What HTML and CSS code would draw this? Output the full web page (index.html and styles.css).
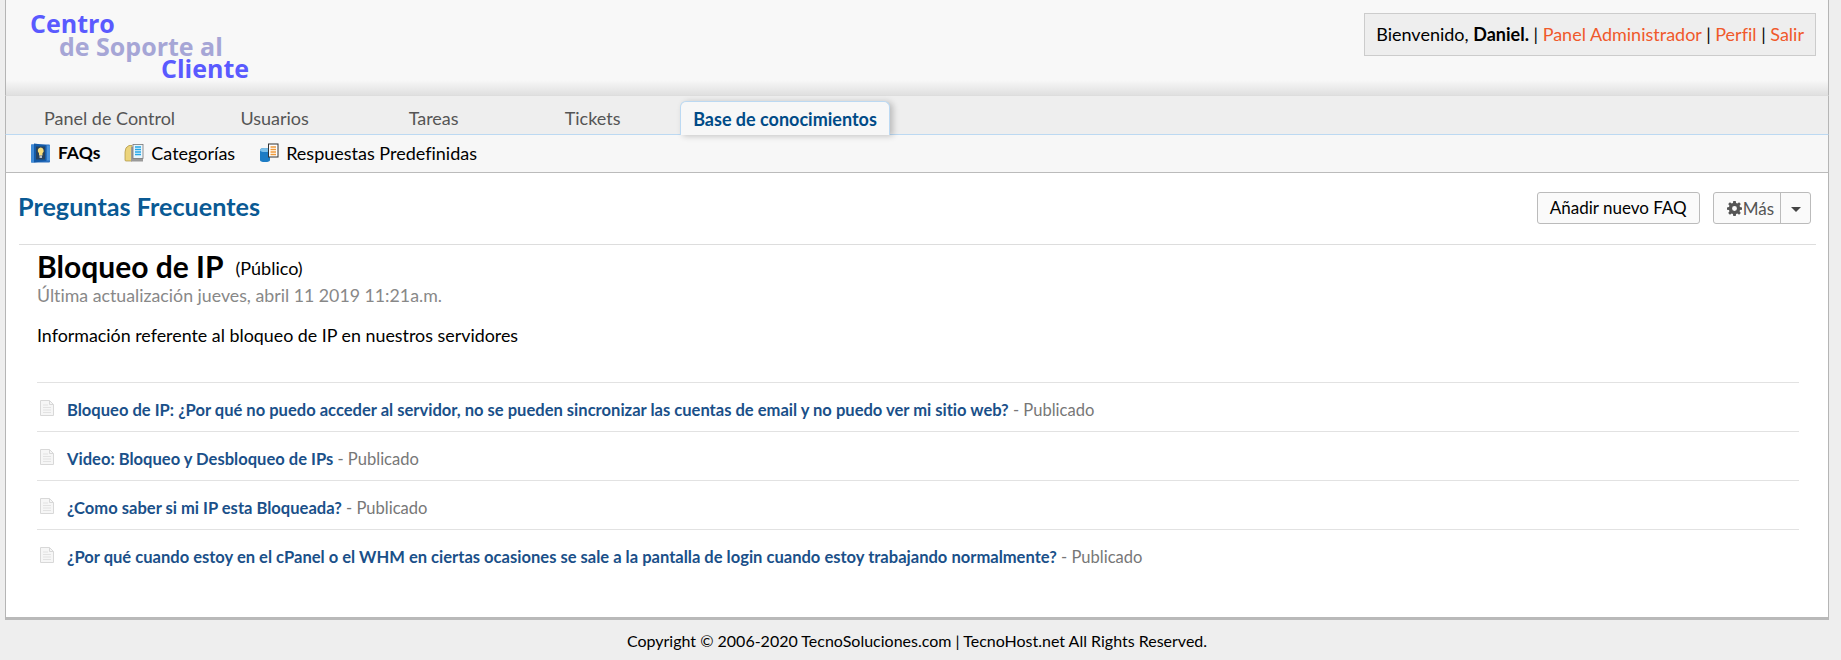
FILE: index.html
```html
<!DOCTYPE html>
<html lang="es">
<head>
<meta charset="utf-8">
<title>Centro de Soporte al Cliente</title>
<link rel="stylesheet" href="styles.css">
</head>
<body>
<div class="page">
  <header class="header">
    <div class="logo">
      <div class="logo-a">Centro</div>
      <div class="logo-b">de Soporte al</div>
      <div class="logo-c">Cliente</div>
    </div>
    <div class="welcome">Bienvenido, <strong>Daniel.</strong> | <a href="#">Panel Administrador</a> | <a href="#">Perfil</a> | <a href="#">Salir</a></div>
  </header>
  <nav class="tabs">
    <a class="tab tab-first" href="#">Panel de Control</a>
    <a class="tab" href="#">Usuarios</a>
    <a class="tab" href="#">Tareas</a>
    <a class="tab" href="#">Tickets</a>
    <a class="tab tab-active" href="#">Base de conocimientos</a>
  </nav>
  <nav class="subnav">
    <a class="sub sub-active" href="#">
      <svg class="sub-icon" viewBox="0 0 20 20"><rect x="0" y="1.500" width="19" height="18" rx="1" fill="#2a6fbe"/><rect x="0" y="1.500" width="3" height="18" fill="#3f8ad6"/><path d="M3 0.500l12 1.500v16l-12 1.500z" fill="#135aa8"/><rect x="5" y="3.500" width="9" height="13" fill="#27425f"/><path d="M9.500 4.500a3.200 3.200 0 0 1 2 5.700v2.300h-3.500v-2.300a3.200 3.200 0 0 1 1.500-5.700z" fill="#f7dc7a"/><rect x="8.500" y="12.500" width="2.500" height="2.500" fill="#b9bfc6"/><rect x="16" y="2.500" width="3" height="15" fill="#4a93dc"/></svg>
      <span>FAQs</span>
    </a>
    <a class="sub" href="#">
      <svg class="sub-icon" viewBox="0 0 20 20"><path d="M1 9q0-5 4-6.500h3V18H2q-1 0-1-1z" fill="#ecd47c" stroke="#a98f3c" stroke-width=".7"/><rect x="7" y="4" width="12" height="14.500" fill="#9a9a9a"/><rect x="9" y="1.500" width="10" height="14" fill="#e9f6fd" stroke="#777" stroke-width=".8"/><path d="M11 4h6M11 6.500h6M11 9h6M11 11.500h6" stroke="#23a6e6" stroke-width="1.300"/></svg>
      <span>Categorías</span>
    </a>
    <a class="sub" href="#">
      <svg class="sub-icon" viewBox="0 0 20 20"><path d="M1 7q0-2 5-2t5 2v10q0 2-5 2t-5-2z" fill="#1d7cc4"/><ellipse cx="6" cy="7" rx="5" ry="2" fill="#7cc0ea"/><rect x="9.500" y="1" width="9.500" height="13" fill="#fff" stroke="#333" stroke-width="1"/><path d="M11.500 4h5.500M11.500 6.500h5.500M11.500 9h5.500M11.500 11.500h5.500" stroke="#ef9a3c" stroke-width="1.500"/></svg>
      <span>Respuestas Predefinidas</span>
    </a>
  </nav>
  <main class="content">
    <div class="title-row">
      <h1 class="page-title">Preguntas Frecuentes</h1>
      <div class="actions">
        <a class="btn" href="#">Añadir nuevo FAQ</a>
        <div class="btn-group">
          <a class="btn-main" href="#">
            <svg class="gear" viewBox="0 0 16 16"><path fill="#555" fill-rule="evenodd" d="M6.700 0h2.600l.4 2.200 1.300.5L12.900 1.400l1.800 1.800-1.300 1.900.5 1.300 2.100.4v2.500l-2.100.4-.5 1.300 1.300 1.900-1.800 1.800-1.900-1.300-1.300.5-.4 2.100H6.700l-.4-2.100-1.300-.5-1.900 1.300-1.800-1.800 1.300-1.900-.5-1.300L0 9.300V6.800l2.100-.4.5-1.300-1.300-1.900 1.800-1.800L5 2.700l1.300-.5zM8 5.400a2.600 2.600 0 1 0 0 5.200 2.600 2.600 0 0 0 0-5.200z"/></svg>Más
          </a>
          <a class="btn-caret" href="#"><span class="caret"></span></a>
        </div>
      </div>
    </div>
    <section class="detail">
      <div class="detail-head"><h2 class="detail-title">Bloqueo de IP</h2><span class="detail-tag">(Público)</span></div>
      <p class="updated">Última actualización jueves, abril 11 2019 11:21a.m.</p>
      <p class="desc">Información referente al bloqueo de IP en nuestros servidores</p>
      <ul class="faq-list">
        <li class="faq"><svg class="doc" viewBox="0 0 14 16"><path d="M.5.500h9l4 4v11H.5z" fill="#f6f6f6" stroke="#d8d8d8"/><path d="M9.500.5v4h4" fill="none" stroke="#d8d8d8"/><path d="M3 5h5M3 7.500h8M3 10h8M3 12.500h8" stroke="#e2e2e2"/></svg><a href="#">Bloqueo de IP: ¿Por qué no puedo acceder al servidor, no se pueden sincronizar las cuentas de email y no puedo ver mi sitio web?</a><span class="state"> - Publicado</span></li>
        <li class="faq"><svg class="doc" viewBox="0 0 14 16"><path d="M.5.500h9l4 4v11H.5z" fill="#f6f6f6" stroke="#d8d8d8"/><path d="M9.500.5v4h4" fill="none" stroke="#d8d8d8"/><path d="M3 5h5M3 7.500h8M3 10h8M3 12.500h8" stroke="#e2e2e2"/></svg><a href="#">Video: Bloqueo y Desbloqueo de IPs</a><span class="state"> - Publicado</span></li>
        <li class="faq"><svg class="doc" viewBox="0 0 14 16"><path d="M.5.500h9l4 4v11H.5z" fill="#f6f6f6" stroke="#d8d8d8"/><path d="M9.500.5v4h4" fill="none" stroke="#d8d8d8"/><path d="M3 5h5M3 7.500h8M3 10h8M3 12.500h8" stroke="#e2e2e2"/></svg><a href="#">¿Como saber si mi IP esta Bloqueada?</a><span class="state"> - Publicado</span></li>
        <li class="faq"><svg class="doc" viewBox="0 0 14 16"><path d="M.5.500h9l4 4v11H.5z" fill="#f6f6f6" stroke="#d8d8d8"/><path d="M9.500.5v4h4" fill="none" stroke="#d8d8d8"/><path d="M3 5h5M3 7.500h8M3 10h8M3 12.500h8" stroke="#e2e2e2"/></svg><a href="#">¿Por qué cuando estoy en el cPanel o el WHM en ciertas ocasiones se sale a la pantalla de login cuando estoy trabajando normalmente?</a><span class="state"> - Publicado</span></li>
      </ul>
    </section>
  </main>
  <footer class="footer">Copyright © 2006-2020 TecnoSoluciones.com | TecnoHost.net All Rights Reserved.</footer>
</div>
</body>
</html>
```

FILE: styles.css
```css
* { box-sizing: border-box; }
html, body { margin: 0; padding: 0; height: 100%; }
body { background: #eee; font-family: Lato, "Liberation Sans", sans-serif; font-size: 16px; color: #000; overflow: hidden; font-variant-ligatures: none; }
a { text-decoration: none; }
.page { margin: 0 12px 0 5px; }
.header { height: 96px; display: flex; justify-content: space-between; align-items: flex-start; padding: 12px 12px 0 24px; background: linear-gradient(#f8f8f8 0, #f8f8f8 80px, #dedede 96px); border-left: 1px solid #b5b5b5; border-right: 1px solid #b5b5b5; border-bottom: 1px solid #ddd; }
.logo { font-family: "Open Sans", sans-serif; font-weight: 700; font-size: 25px; line-height: 22.500px; }
.logo-a { color: #5a5aff; }
.logo-b { color: #a6a6d6; margin-left: 29px; }
.logo-c { color: #5a5aff; margin-left: 131px; }
.welcome { height: 43px; margin-top: 1px; padding: 0 11px; line-height: 41px; background: #eee; border: 1px solid #ccc; font-size: 18px; white-space: nowrap; }
.welcome a { color: #f0592b; }
.tabs { height: 39px; display: flex; align-items: flex-end; padding-left: 18px; background: #eee; border-left: 1px solid #b5b5b5; border-right: 1px solid #b5b5b5; border-bottom: 1px solid #bcd9f2; }
.tab { height: 33px; min-width: 159px; padding: 0 20px; line-height: 35px; text-align: center; font-size: 18px; color: #555; }
.tab-active { min-width: 0; margin: 0 0 -1px 8px; padding: 0 12px; height: 34px; background: #f7f7f7; border: 1px solid #bcd9f2; border-bottom: 0; border-radius: 6px 6px 0 0; box-shadow: 3px 1px 6px rgba(0,0,0,.22); color: #004b87; font-weight: 700; }
.subnav { height: 38px; display: flex; align-items: center; padding: 0 0 2px 25px; gap: 24px; background: #f7f7f7; border-left: 1px solid #b5b5b5; border-right: 1px solid #b5b5b5; border-bottom: 1px solid #bbb; }
.sub { display: flex; align-items: center; gap: 7px; color: #000; font-size: 18px; }
.sub-active { font-weight: 700; font-size: 17.500px; }
.sub-icon { width: 20px; height: 20px; display: block; }
.content { height: 447px; padding: 0 12px 0 13px; background: #fff; border-left: 1px solid #b5b5b5; border-right: 1px solid #b5b5b5; border-bottom: 3px solid #b9b9b9; }
.title-row { height: 72px; display: flex; justify-content: space-between; align-items: center; padding-bottom: 5px; border-bottom: 1px solid #ddd; }
.page-title { margin: 0 0 0 -1px; font-size: 25.200px; font-weight: 700; color: #0a5a94; }
.actions { display: flex; gap: 13px; margin-right: 5px; margin-top: 4px; }
.btn { height: 32px; padding: 0 12px; line-height: 29px; background: #fafafa; border: 1px solid #bbb; border-radius: 3px; font-size: 17px; color: #000; }
.btn-group { display: flex; height: 32px; background: #fafafa; border: 1px solid #bbb; border-radius: 3px; }
.btn-main { display: flex; align-items: center; gap: 1px; padding: 0 6px 0 13px; color: #555; font-size: 17px; border-right: 1px solid #bbb; }
.gear { width: 15px; height: 15px; }
.btn-caret { width: 29px; display: flex; align-items: center; justify-content: center; padding-top: 3px; }
.caret { border: 5px solid transparent; border-top: 5px solid #444; border-bottom: 0; }
.detail { padding: 0 17px 0 18px; }
.detail-head { display: flex; align-items: flex-start; gap: 12px; margin-top: 1px; }
.detail-title { margin: 0; font-size: 30px; font-weight: 700; line-height: 40px; }
.detail-tag { font-size: 18px; line-height: 22px; margin-top: 11px; }
.updated { margin: -3px 0 0; font-size: 17.750px; line-height: 24px; color: #888; }
.desc { margin: 16px 0 0; font-size: 17.850px; line-height: 24px; }
.faq-list { list-style: none; margin: 35px 0 0; padding: 0; }
.faq { height: 49px; display: flex; align-items: center; padding: 6px 0 0 3px; border-top: 1px solid #e2e2e2; font-size: 16.560px; white-space: pre; }
.faq a { color: #1a5089; font-weight: 700; }
.state { color: #777; }
.doc { width: 14px; height: 16px; margin: -5px 13px 0 0; flex: none; }
.footer { height: 40px; line-height: 42px; padding-right: 7px; text-align: center; font-size: 16px; margin-left: -5px; margin-right: -12px; }
```
